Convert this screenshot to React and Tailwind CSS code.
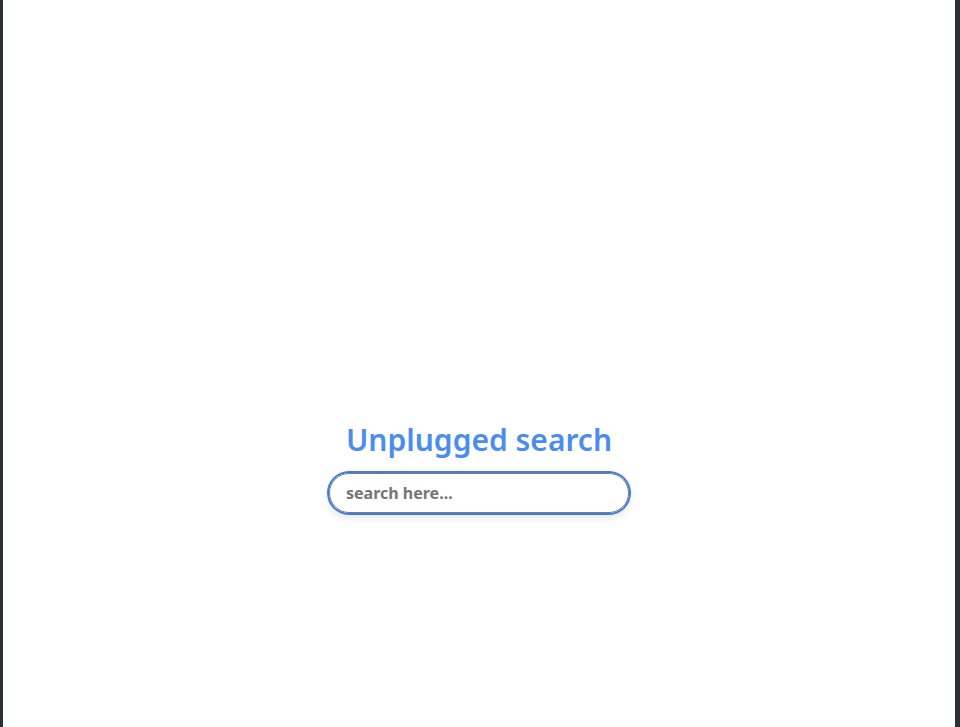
export default function App() {
  return (
    <div className="h-screen bg-[#2b2f36] flex">
      <div className="ml-[3px] mr-[5px] flex-1 bg-white flex flex-col items-center pt-[419px]" style={{ fontFamily: '"Noto Sans", sans-serif' }}>
        <h1 className="text-[30px] font-semibold text-[#4a8cf0] leading-[41px]">Unplugged search</h1>
        <div className="mt-[13px] rounded-full shadow-[0_4px_10px_rgba(0,0,0,0.12)] ring-2 ring-[#3a7fe0]">
          <input
            type="text"
            autoFocus
            placeholder="search here..."
            className="w-[300px] h-[40px] rounded-full border border-[#7a7a7a] bg-white px-[16px] text-[16px] font-bold text-gray-700 placeholder:text-[#757575] outline-none caret-black"
          />
        </div>
      </div>
    </div>
  );
}
